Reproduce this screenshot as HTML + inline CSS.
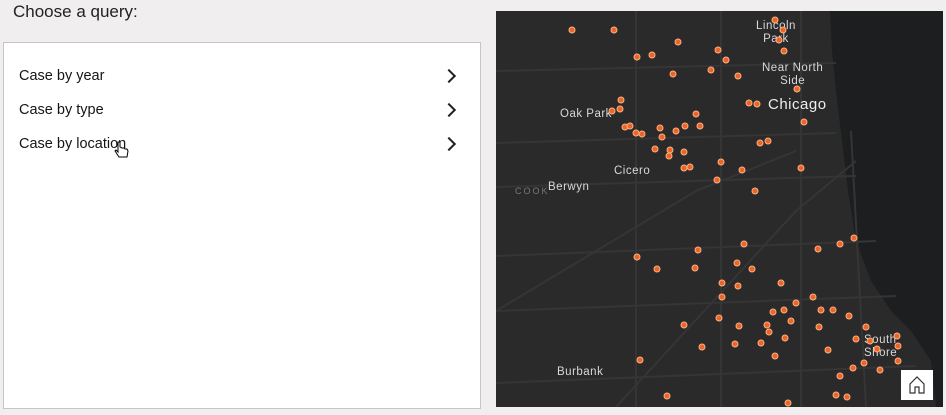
<!DOCTYPE html>
<html><head><style>
body{margin:0;width:946px;height:415px;background:#f0eeee;font-family:"Liberation Sans",sans-serif;position:relative;overflow:hidden}
.t{position:absolute;left:13px;top:2px;font-size:17px;color:#222}
.panel{position:absolute;left:3px;top:42px;width:476px;height:365px;background:#fff;border:1px solid #c6c6c6}
.it{position:absolute;left:15px;font-size:14.5px;color:#151515}
.ch{position:absolute;left:440px;width:8px;height:8px;border-right:2px solid #222;border-top:2px solid #222;transform:rotate(45deg)}
.map{position:absolute;left:496px;top:11px;width:447px;height:396px;background:#2a2a2a;overflow:hidden}
.lbl{position:absolute;color:#d8d8d8;font-size:11.5px;letter-spacing:.5px;text-align:center;line-height:13px}
.home{position:absolute;left:405px;top:359px;width:32px;height:30px;background:#fff}
</style></head><body>
<div class="t">Choose a query:</div>
<div class="panel">
<div class="it" style="top:25px">Case by year</div><div class="ch" style="top:28px"></div>
<div class="it" style="top:59px">Case by type</div><div class="ch" style="top:62px"></div>
<div class="it" style="top:93px">Case by location</div><div class="ch" style="top:96px"></div>
<svg style="position:absolute;left:110px;top:98px" width="16" height="18" viewBox="0 0 16 18"><path d="M4 1v10l-2-2-1 1 4 6h8l1-6-1-2-2 0-1-1-2 0V7L6 6V1z" fill="#fff" stroke="#000" stroke-width="1"/></svg>
</div>
<div class="map">
<svg width="447" height="396" style="position:absolute;left:0;top:0">
<path d="M334 0 L447 0 L447 396 L440 396 L435 350 L415 320 L395 300 L375 270 L360 230 L352 180 L346 130 L340 80 L336 40Z" fill="#1c1e20"/>
<g stroke="#353535" stroke-width="2" fill="none">
<path d="M0 60 L340 52"/><path d="M0 132 L340 122"/><path d="M0 176 L360 165"/><path d="M0 245 L380 230"/><path d="M0 300 L400 285"/><path d="M0 372 L420 355"/>
<path d="M140 0 V396"/><path d="M225 0 V396"/><path d="M305 0 V396"/><path d="M355 120 L370 396"/>
<path d="M0 300 L200 180 L300 140"/><path d="M120 396 L300 200 L360 150"/>
</g></svg>
<div class="lbl" style="left:260px;top:9px">Lincoln<br>Park</div>
<div class="lbl" style="left:266px;top:51px">Near North<br>Side</div>
<div class="lbl" style="left:272px;top:87px;font-size:15px;color:#eee">Chicago</div>
<div class="lbl" style="left:64px;top:97px">Oak Park</div>
<div class="lbl" style="left:118px;top:154px">Cicero</div>
<div class="lbl" style="left:52px;top:170px">Berwyn</div>
<div class="lbl" style="left:19px;top:174px;font-size:9px;color:#777;letter-spacing:2px">COOK</div>
<div class="lbl" style="left:61px;top:355px">Burbank</div>
<div class="lbl" style="left:368px;top:323px;text-align:left">South<br>Shore</div>
<div class="home"><svg width="32" height="30" viewBox="0 0 32 30"><path d="M9 23V14l7-7 7 7v9h-5v-6h-4v6z" fill="none" stroke="#333" stroke-width="1.2"/></svg></div>
</div>
<svg style="position:absolute;left:0;top:0" width="946" height="415">
<g fill="#e8662c" stroke="#ffb080" stroke-width="1">
<circle cx="572" cy="30" r="3"/><circle cx="614" cy="30" r="3"/><circle cx="678" cy="42" r="3"/><circle cx="718" cy="50" r="3"/><circle cx="637" cy="57" r="3"/><circle cx="652" cy="55" r="3"/><circle cx="673" cy="74" r="3"/><circle cx="711" cy="70" r="3"/><circle cx="726" cy="60" r="3"/><circle cx="738" cy="76" r="3"/>
<circle cx="775" cy="20" r="3"/><circle cx="783" cy="30" r="3"/><circle cx="779" cy="40" r="3"/><circle cx="784" cy="51" r="3"/><circle cx="797" cy="89" r="3"/><circle cx="749" cy="103" r="3"/><circle cx="757" cy="104" r="3"/><circle cx="804" cy="122" r="3"/><circle cx="768" cy="141" r="3"/><circle cx="760" cy="143" r="3"/><circle cx="801" cy="168" r="3"/><circle cx="742" cy="170" r="3"/><circle cx="717" cy="180" r="3"/><circle cx="721" cy="162" r="3"/><circle cx="755" cy="191" r="3"/><circle cx="690" cy="167" r="3"/><circle cx="684" cy="168" r="3"/><circle cx="670" cy="150" r="3"/><circle cx="669" cy="156" r="3"/><circle cx="684" cy="152" r="3"/><circle cx="655" cy="149" r="3"/><circle cx="642" cy="134" r="3"/><circle cx="636" cy="133" r="3"/><circle cx="625" cy="127" r="3"/><circle cx="630" cy="126" r="3"/><circle cx="621" cy="100" r="3"/><circle cx="620" cy="109" r="3"/><circle cx="612" cy="111" r="3"/><circle cx="660" cy="128" r="3"/><circle cx="676" cy="131" r="3"/><circle cx="662" cy="137" r="3"/><circle cx="700" cy="126" r="3"/><circle cx="696" cy="114" r="3"/><circle cx="685" cy="126" r="3"/>
<circle cx="854" cy="238" r="3"/><circle cx="840" cy="244" r="3"/><circle cx="818" cy="249" r="3"/><circle cx="744" cy="244" r="3"/><circle cx="698" cy="250" r="3"/><circle cx="637" cy="257" r="3"/><circle cx="657" cy="269" r="3"/><circle cx="695" cy="268" r="3"/><circle cx="737" cy="263" r="3"/><circle cx="752" cy="269" r="3"/><circle cx="722" cy="283" r="3"/><circle cx="738" cy="286" r="3"/><circle cx="722" cy="297" r="3"/><circle cx="781" cy="283" r="3"/><circle cx="796" cy="303" r="3"/><circle cx="773" cy="312" r="3"/><circle cx="784" cy="310" r="3"/><circle cx="821" cy="310" r="3"/><circle cx="833" cy="310" r="3"/><circle cx="849" cy="316" r="3"/><circle cx="813" cy="297" r="3"/><circle cx="767" cy="325" r="3"/><circle cx="791" cy="321" r="3"/><circle cx="719" cy="318" r="3"/><circle cx="684" cy="325" r="3"/><circle cx="739" cy="326" r="3"/><circle cx="769" cy="332" r="3"/><circle cx="761" cy="343" r="3"/><circle cx="735" cy="344" r="3"/><circle cx="702" cy="347" r="3"/><circle cx="775" cy="356" r="3"/><circle cx="785" cy="338" r="3"/><circle cx="819" cy="327" r="3"/><circle cx="828" cy="350" r="3"/><circle cx="866" cy="327" r="3"/><circle cx="856" cy="339" r="3"/><circle cx="864" cy="363" r="3"/><circle cx="880" cy="370" r="3"/><circle cx="898" cy="346" r="3"/><circle cx="898" cy="361" r="3"/><circle cx="877" cy="349" r="3"/><circle cx="847" cy="397" r="3"/><circle cx="840" cy="376" r="3"/><circle cx="853" cy="368" r="3"/><circle cx="640" cy="360" r="3"/><circle cx="667" cy="396" r="3"/><circle cx="788" cy="403" r="3"/><circle cx="836" cy="395" r="3"/><circle cx="897" cy="336" r="3"/><circle cx="870" cy="341" r="3"/>
</g></svg>
</body></html>
